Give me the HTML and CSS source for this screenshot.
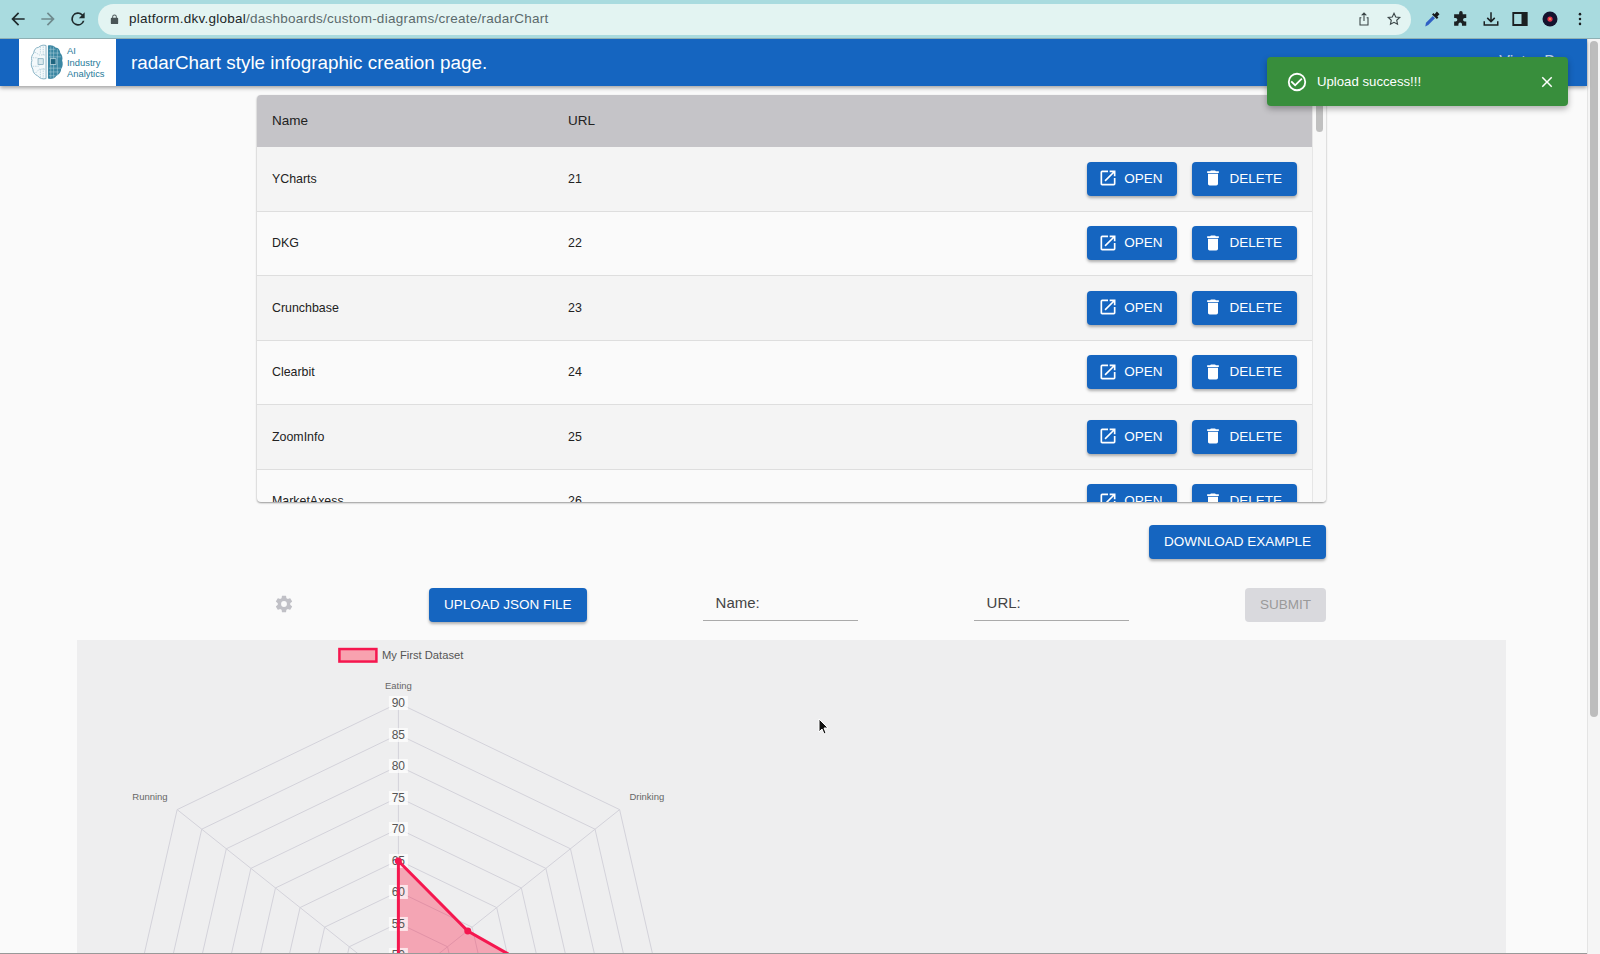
FILE: index.html
```html
<!DOCTYPE html>
<html lang="en">
<head>
  <meta charset="UTF-8">
  <meta name="viewport" content="width=device-width, initial-scale=1.0">
  <title>radarChart</title>
  <link rel="stylesheet" href="styles.css">
</head>
<body>
  <!-- browser toolbar -->
  <div class="browser-bar">
    <svg class="nav-icon" viewBox="0 0 24 24"><path d="M20 11H7.8l5.6-5.6L12 4l-8 8 8 8 1.4-1.4L7.8 13H20z" fill="#1f2a2c"/></svg>
    <svg class="nav-icon" viewBox="0 0 24 24"><path d="M4 11h12.2l-5.6-5.6L12 4l8 8-8 8-1.4-1.4 5.6-5.6H4z" fill="#6f8a8d"/></svg>
    <svg class="nav-icon" viewBox="0 0 24 24"><path d="M17.65 6.35A8 8 0 1 0 19.73 14h-2.08A6 6 0 1 1 12 6c1.66 0 3.14.69 4.22 1.78L13 11h7V4z" fill="#1f2a2c"/></svg>
    <div class="url-pill">
      <svg class="lock" viewBox="0 0 24 24"><path d="M18 8h-1V6a5 5 0 0 0-10 0v2H6a2 2 0 0 0-2 2v10c0 1.1.9 2 2 2h12a2 2 0 0 0 2-2V10a2 2 0 0 0-2-2zM9 6a3 3 0 0 1 6 0v2H9z" fill="#4a5557"/></svg>
      <span class="url-text"><b>platform.dkv.global</b>/dashboards/custom-diagrams/create/radarChart</span>
      <svg class="pill-icon" viewBox="0 0 24 24" fill="none" stroke="#3a4547" stroke-width="1.6"><path d="M8 10H6v11h12V10h-2M12 15V3M8.5 6.5 12 3l3.5 3.5"/></svg>
      <svg class="pill-icon" viewBox="0 0 24 24" fill="none" stroke="#3a4547" stroke-width="1.7"><path d="m12 3.5 2.6 5.6 6 .7-4.5 4.1 1.2 6L12 17l-5.3 2.9 1.2-6-4.5-4.1 6-.7z"/></svg>
    </div>
    <div class="ext-icons">
      <svg class="ext-icon" viewBox="0 0 24 24"><path d="m3 22 1-5 9-9 3 3-9 9z" fill="#2f5fc4"/><path d="m12 6 2-2 1.500 1.500L18.500 2 22 5.500 19 8.500l1.500 1.500-2 2z" fill="#16191a"/></svg>
      <svg class="ext-icon" viewBox="0 0 24 24"><path d="M10 3a2.500 2.500 0 0 1 5 0v2h5v5h-2a2.500 2.500 0 0 0 0 5h2v6h-6v-2a2.500 2.500 0 0 0-5 0v2H3v-6h2a2.500 2.500 0 0 0 0-5H3V5h7z" fill="#1b2022" transform="translate(0 1) scale(.95)"/></svg>
      <svg class="ext-icon" viewBox="0 0 24 24" fill="none" stroke="#1b2022" stroke-width="2"><path d="M12 3v12M7 10.500l5 5 5-5M3 15v5h18v-5"/></svg>
      <svg class="ext-icon" viewBox="0 0 24 24"><path d="M3 4h18v16H3z" fill="none" stroke="#1b2022" stroke-width="2.400"/><path d="M14 4h7v16h-7z" fill="#1b2022"/></svg>
      <svg class="ext-icon" viewBox="0 0 24 24"><circle cx="12" cy="12" r="10" fill="#14132e"/><circle cx="12" cy="12" r="3.500" fill="#e0344f"/><circle cx="12" cy="12" r="1.200" fill="#f2b33d"/></svg>
      <svg class="ext-icon" viewBox="0 0 24 24"><circle cx="12" cy="5.500" r="1.700" fill="#1b2022"/><circle cx="12" cy="12" r="1.700" fill="#1b2022"/><circle cx="12" cy="18.500" r="1.700" fill="#1b2022"/></svg>
    </div>
  </div>

  <div class="viewport">
    <div class="page">
      <header class="app-bar">
        <div class="logo-box">
          <svg class="brain" viewBox="0 0 36 40">
            <path d="M17 2c-3-1-6 0-8 2-3 0-5 3-5 6-2 2-3 5-2 8-1 3-1 6 1 9 0 3 2 6 5 7 2 3 6 4 9 3z" fill="#f4f9fb" stroke="#7fadc0" stroke-width="1"/>
            <path d="M5 9l5 3h6M3 15h5l2 2M3 24h6l2-2M6 31l4-4h6M11 3v8M14 3v9M11 27v9M14 26v11" fill="none" stroke="#9cc1cf" stroke-width=".7" stroke-dasharray="1.500 1"/>
            <rect x="8.500" y="16" width="5.500" height="6" fill="#dbe9ee" stroke="#6d9db1" stroke-width=".7"/>
            <path d="M19 2c3-1 6 0 8 2 3 0 5 3 5 6 2 2 3 5 2 8 1 3 1 6-1 9 0 3-2 6-5 7-2 3-6 4-9 3z" fill="#3a86a2"/>
            <path d="M20 6h7M20 10h11M20 14h13M20 26h13M20 30h11M20 34h7M22 3v34M25 3v34M29 6v28" stroke="#bcd8e2" stroke-width=".5"/>
            <rect x="21.500" y="16" width="6" height="6" fill="#1f6580" stroke="#d7e8ee" stroke-width=".7"/>
          </svg>
          <div class="logo-text">AI<br>Industry<br>Analytics</div>
        </div>
        <h1 class="app-title">radarChart style infographic creation page.</h1>
        <span class="user-name">Victor B</span>
      </header>

      <main class="content">
        <div class="table-wrap">
          <div class="table-scroll">
            <div class="table-head">
              <div class="col-name">Name</div>
              <div class="col-url">URL</div>
            </div>
            <div class="table-row row-alt">
              <div class="col-name">YCharts</div>
              <div class="col-url">21</div>
              <div class="row-actions">
                <button class="btn"><svg class="btn-icon" viewBox="0 0 24 24"><path d="M19 19H5V5h7V3H5a2 2 0 0 0-2 2v14c0 1.100.9 2 2 2h14a2 2 0 0 0 2-2v-7h-2zM14 3v2h3.590l-9.830 9.830 1.410 1.410L19 6.410V10h2V3z"/></svg>Open</button>
                <button class="btn"><svg class="btn-icon" viewBox="0 0 24 24"><path d="M6 19c0 1.100.9 2 2 2h8a2 2 0 0 0 2-2V7H6zM19 4h-3.500l-1-1h-5l-1 1H5v2h14z"/></svg>Delete</button>
              </div>
            </div>
            <div class="table-row">
              <div class="col-name">DKG</div>
              <div class="col-url">22</div>
              <div class="row-actions">
                <button class="btn"><svg class="btn-icon" viewBox="0 0 24 24"><path d="M19 19H5V5h7V3H5a2 2 0 0 0-2 2v14c0 1.100.9 2 2 2h14a2 2 0 0 0 2-2v-7h-2zM14 3v2h3.590l-9.830 9.830 1.410 1.410L19 6.410V10h2V3z"/></svg>Open</button>
                <button class="btn"><svg class="btn-icon" viewBox="0 0 24 24"><path d="M6 19c0 1.100.9 2 2 2h8a2 2 0 0 0 2-2V7H6zM19 4h-3.500l-1-1h-5l-1 1H5v2h14z"/></svg>Delete</button>
              </div>
            </div>
            <div class="table-row row-alt">
              <div class="col-name">Crunchbase</div>
              <div class="col-url">23</div>
              <div class="row-actions">
                <button class="btn"><svg class="btn-icon" viewBox="0 0 24 24"><path d="M19 19H5V5h7V3H5a2 2 0 0 0-2 2v14c0 1.100.9 2 2 2h14a2 2 0 0 0 2-2v-7h-2zM14 3v2h3.590l-9.830 9.830 1.410 1.410L19 6.410V10h2V3z"/></svg>Open</button>
                <button class="btn"><svg class="btn-icon" viewBox="0 0 24 24"><path d="M6 19c0 1.100.9 2 2 2h8a2 2 0 0 0 2-2V7H6zM19 4h-3.500l-1-1h-5l-1 1H5v2h14z"/></svg>Delete</button>
              </div>
            </div>
            <div class="table-row">
              <div class="col-name">Clearbit</div>
              <div class="col-url">24</div>
              <div class="row-actions">
                <button class="btn"><svg class="btn-icon" viewBox="0 0 24 24"><path d="M19 19H5V5h7V3H5a2 2 0 0 0-2 2v14c0 1.100.9 2 2 2h14a2 2 0 0 0 2-2v-7h-2zM14 3v2h3.590l-9.830 9.830 1.410 1.410L19 6.410V10h2V3z"/></svg>Open</button>
                <button class="btn"><svg class="btn-icon" viewBox="0 0 24 24"><path d="M6 19c0 1.100.9 2 2 2h8a2 2 0 0 0 2-2V7H6zM19 4h-3.500l-1-1h-5l-1 1H5v2h14z"/></svg>Delete</button>
              </div>
            </div>
            <div class="table-row row-alt">
              <div class="col-name">ZoomInfo</div>
              <div class="col-url">25</div>
              <div class="row-actions">
                <button class="btn"><svg class="btn-icon" viewBox="0 0 24 24"><path d="M19 19H5V5h7V3H5a2 2 0 0 0-2 2v14c0 1.100.9 2 2 2h14a2 2 0 0 0 2-2v-7h-2zM14 3v2h3.590l-9.830 9.830 1.410 1.410L19 6.410V10h2V3z"/></svg>Open</button>
                <button class="btn"><svg class="btn-icon" viewBox="0 0 24 24"><path d="M6 19c0 1.100.9 2 2 2h8a2 2 0 0 0 2-2V7H6zM19 4h-3.500l-1-1h-5l-1 1H5v2h14z"/></svg>Delete</button>
              </div>
            </div>
            <div class="table-row">
              <div class="col-name">MarketAxess</div>
              <div class="col-url">26</div>
              <div class="row-actions">
                <button class="btn"><svg class="btn-icon" viewBox="0 0 24 24"><path d="M19 19H5V5h7V3H5a2 2 0 0 0-2 2v14c0 1.100.9 2 2 2h14a2 2 0 0 0 2-2v-7h-2zM14 3v2h3.590l-9.830 9.830 1.410 1.410L19 6.410V10h2V3z"/></svg>Open</button>
                <button class="btn"><svg class="btn-icon" viewBox="0 0 24 24"><path d="M6 19c0 1.100.9 2 2 2h8a2 2 0 0 0 2-2V7H6zM19 4h-3.500l-1-1h-5l-1 1H5v2h14z"/></svg>Delete</button>
              </div>
            </div>
          </div>
          <div class="table-scrollbar"><div class="table-thumb"></div></div>
        </div>

        <div class="download-row">
          <button class="btn">Download Example</button>
        </div>

        <div class="form-row">
          <div class="gear-box">
            <svg class="gear" viewBox="0 0 24 24"><path d="M19.430 12.980c.04-.32.07-.64.07-.98s-.03-.66-.07-.98l2.110-1.650c.19-.15.240-.42.120-.64l-2-3.460c-.12-.22-.39-.3-.61-.22l-2.490 1c-.52-.4-1.080-.73-1.690-.98l-.38-2.650A.488.488 0 0 0 14 2h-4c-.25 0-.46.18-.49.420l-.38 2.650c-.61.25-1.170.59-1.690.98l-2.490-1c-.23-.09-.49 0-.61.220l-2 3.460c-.13.220-.07.490.12.640l2.110 1.650c-.04.32-.07.65-.07.980s.03.660.07.980l-2.110 1.650c-.19.150-.24.420-.12.640l2 3.460c.12.220.39.300.61.220l2.490-1c.52.400 1.080.730 1.690.980l.38 2.650c.03.240.24.420.49.420h4c.25 0 .46-.18.49-.42l.38-2.650c.61-.25 1.170-.59 1.690-.98l2.490 1c.23.090.49 0 .61-.22l2-3.460c.12-.22.07-.49-.12-.64zM12 15.500a3.500 3.500 0 1 1 0-7 3.500 3.500 0 0 1 0 7z"/></svg>
          </div>
          <button class="btn btn-upload">Upload JSON file</button>
          <div class="text-field field-name">Name:</div>
          <div class="text-field field-url">URL:</div>
          <button class="btn btn-disabled">Submit</button>
        </div>
      </main>

      <div class="chart-area">
        <svg class="radar" viewBox="0 0 1430 314">
          <rect class="legend-box" x="262.500" y="9" width="37" height="12.500"/>
          <text class="legend-text" x="305" y="19">My First Dataset</text>

          <g transform="translate(321.500 346)">
            <g class="grid">
              <polygon id="ring" points="0,-283 221.300,-176.400 275.900,63 122.800,255 -122.800,255 -275.900,63 -221.300,-176.400"/>
              <use href="#ring" transform="scale(.8889)"/>
              <use href="#ring" transform="scale(.7778)"/>
              <use href="#ring" transform="scale(.6667)"/>
              <use href="#ring" transform="scale(.5556)"/>
              <use href="#ring" transform="scale(.4444)"/>
              <use href="#ring" transform="scale(.3333)"/>
              <use href="#ring" transform="scale(.2222)"/>
              <use href="#ring" transform="scale(.1111)"/>
              <path d="M0 0V-283M0 0 221.300-176.400M0 0 275.900 63M0 0 122.800 255M0 0-122.800 255M0 0-275.900 63M0 0-221.300-176.400"/>
            </g>
            <polygon class="data-fill" points="0,-125 69.400,-55 276,63 0,0"/>
          </g>

          <text class="axis-label" x="321.500" y="49" text-anchor="middle">Eating</text>
          <text class="axis-label" x="73" y="160" text-anchor="middle">Running</text>
          <text class="axis-label" x="570" y="160" text-anchor="middle">Drinking</text>

          <g class="ticks" text-anchor="middle">
            <rect x="312" y="56" width="19" height="14"/><text x="321.500" y="67">90</text>
            <rect x="312" y="88" width="19" height="14"/><text x="321.500" y="99">85</text>
            <rect x="312" y="119" width="19" height="14"/><text x="321.500" y="130">80</text>
            <rect x="312" y="151" width="19" height="14"/><text x="321.500" y="162">75</text>
            <rect x="312" y="182" width="19" height="14"/><text x="321.500" y="193">70</text>
            <rect x="312" y="214" width="19" height="14"/><text x="321.500" y="225">65</text>
            <rect x="312" y="245" width="19" height="14"/><text x="321.500" y="256">60</text>
            <rect x="312" y="277" width="19" height="14"/><text x="321.500" y="288">55</text>
            <rect x="312" y="308" width="19" height="14"/><text x="321.500" y="319">50</text>
          </g>
          <g transform="translate(321.500 346)">
            <polygon class="data-line" points="0,-125 69.400,-55 276,63 0,0"/>
            <circle class="data-point" cx="0" cy="-125" r="3.500"/>
            <circle class="data-point" cx="69.400" cy="-55" r="3.500"/>
          </g>
        </svg>
      </div>
      <div class="bottom-line"></div>
    </div>

    <div class="page-scrollbar"><div class="page-thumb"></div></div>

    <!-- floating bits -->
    <div class="toast">
      <svg class="toast-check" viewBox="0 0 24 24"><path d="M16.590 7.580 10 14.170l-3.590-3.580L5 12l5 5 8-8zM12 2a10 10 0 1 0 0 20 10 10 0 0 0 0-20zm0 18a8 8 0 1 1 0-16 8 8 0 0 1 0 16z"/></svg>
      <span class="toast-text">Upload success!!!</span>
      <svg class="toast-close" viewBox="0 0 24 24"><path d="M19 6.410 17.590 5 12 10.590 6.410 5 5 6.410 10.590 12 5 17.590 6.410 19 12 13.410 17.590 19 19 17.590 13.410 12z"/></svg>
    </div>
    <svg class="cursor" viewBox="0 0 12 18"><path d="M1 1v13l3-3 2 5 2-1-2-5h4z" fill="#111" stroke="#fff" stroke-width="1"/></svg>
  </div>
</body>
</html>
```

FILE: styles.css
```css
html, body {
  margin: 0;
  height: 954px;
  overflow: hidden;
}
body {
  font-family: "Liberation Sans", Arial, sans-serif;
  background: #fafafa;
  color: #222;
}
button {
  font-family: inherit;
}

/* browser toolbar */
.browser-bar {
  height: 39px;
  box-sizing: border-box;
  border-bottom: 1px solid #8fb0b3;
  background: #a9dbdf;
  display: flex;
  align-items: center;
  padding-left: 8px;
  gap: 10px;
}
.nav-icon {
  width: 20px;
  height: 20px;
}
.url-pill {
  width: 1313px;
  height: 31px;
  border-radius: 16px;
  background: #e3f4f2;
  display: flex;
  align-items: center;
  padding: 0 9px 0 11px;
  box-sizing: border-box;
}
.lock {
  width: 11px;
  height: 11px;
  margin-right: 9px;
}
.url-text {
  flex: 1;
  font-size: 13.500px;
  color: #5b6a6c;
  letter-spacing: .25px;
  padding-bottom: 1px;
}
.url-text b {
  font-weight: normal;
  color: #1b2628;
}
.pill-icon {
  width: 16px;
  height: 16px;
  margin-left: 13.600px;
}
.ext-icons {
  display: flex;
  align-items: center;
  gap: 11.600px;
  margin-left: 1.600px;
}
.ext-icon {
  width: 18px;
  height: 18px;
}

.viewport {
  position: relative;
  display: flex;
  height: 915px;
  overflow: hidden;
}
.page {
  flex: 1;
  min-width: 0;
  position: relative;
}

/* app bar */
.app-bar {
  height: 47px;
  background: #1565c0;
  box-shadow: 0 2px 4px rgba(0, 0, 0, .35);
  display: flex;
  align-items: center;
  padding-left: 19px;
  color: #fff;
}
.logo-box {
  width: 97px;
  height: 47px;
  box-sizing: border-box;
  background: #fff;
  display: flex;
  align-items: center;
  padding-left: 11px;
  gap: 3px;
}
.brain {
  width: 34px;
  height: 39px;
}
.logo-text {
  font-size: 9.400px;
  line-height: 11.500px;
  color: #1f7a9a;
}
.app-title {
  margin: 0 0 0 15px;
  font-size: 18.850px;
  font-weight: normal;
}
.user-name {
  margin-left: auto;
  margin-right: 32px;
  margin-top: -2px;
  font-size: 16px;
  opacity: .7;
}

/* table */
.content {
  margin: 9px 261px 0 257px;
}
.table-wrap {
  height: 407px;
  display: flex;
  overflow: hidden;
  border-radius: 4px;
  background: #fafafa;
  box-shadow: 0 1px 2px rgba(0, 0, 0, .4);
}
.table-scroll {
  flex: 1;
  min-width: 0;
}
.table-head {
  height: 52px;
  padding-bottom: 2px;
  box-sizing: border-box;
  background: #c5c4c8;
  display: flex;
  align-items: center;
  font-size: 13.500px;
}
.table-row {
  height: 64.500px;
  box-sizing: border-box;
  border-bottom: 1px solid #dedede;
  display: flex;
  align-items: center;
  font-size: 12.400px;
}
.row-alt {
  background: #f4f4f4;
}
.col-name {
  width: 311px;
  padding-left: 15px;
  box-sizing: border-box;
}
.col-url {
  width: 100px;
}
.row-actions {
  margin-left: auto;
  margin-right: 15px;
  display: flex;
  gap: 15px;
}
.table-scrollbar {
  width: 14px;
  background: #f8f8f8;
  border-left: 1px solid #e6e6e6;
  box-sizing: border-box;
  padding: 2px 3px;
}
.table-thumb {
  height: 35px;
  border-radius: 4px;
  background: #c0c0c0;
}

/* buttons */
.btn {
  height: 34px;
  padding: 0 15px 1px;
  border: 0;
  border-radius: 4px;
  background: #1565c0;
  color: #fff;
  font-size: 13.500px;
  font-weight: normal;
  text-transform: uppercase;
  display: inline-flex;
  align-items: center;
  box-shadow: 0 2px 3px rgba(0, 0, 0, .3);
}
.btn-icon {
  width: 20px;
  height: 20px;
  fill: #fff;
  margin-right: 6px;
  margin-left: -4px;
}

.download-row {
  display: flex;
  justify-content: flex-end;
  margin-top: 23px;
}

/* form row */
.form-row {
  display: flex;
  align-items: flex-start;
  margin-top: 26px;
  height: 37px;
}
.gear-box {
  width: 54px;
  height: 37px;
  display: flex;
  align-items: center;
  justify-content: center;
}
.gear {
  width: 20px;
  height: 20px;
  fill: #c0c0c6;
}
.btn-upload {
  margin-left: 118px;
  margin-top: 3px;
}
.text-field {
  width: 155px;
  height: 35px;
  margin-top: 1px;
  box-sizing: border-box;
  border-bottom: 1px solid #aaa;
  padding: 8px 0 0 13px;
  font-size: 15px;
  color: #444;
}
.field-name {
  margin-left: 116px;
}
.field-url {
  margin-left: 116px;
}
.btn-disabled {
  margin-left: auto;
  margin-top: 3px;
  background: #d9d9dd;
  color: #9a9a9a;
  box-shadow: none;
}

/* chart */
.chart-area {
  margin: 18px 81px 0 76.500px;
  height: 314px;
  background: #eeeeef;
}
.radar {
  display: block;
  width: 100%;
  height: 100%;
}
.legend-box {
  fill: #f8a2af;
  stroke: #f5174f;
  stroke-width: 2.500;
}
.legend-text {
  font-size: 11.200px;
  fill: #555;
}
.axis-label {
  font-size: 9.500px;
  fill: #666;
}
.grid polygon, .grid use, .grid path {
  fill: none;
  stroke: #d3d2da;
  stroke-width: 1;
  vector-effect: non-scaling-stroke;
}
.data-fill {
  fill: rgba(255, 23, 68, .34);
}
.data-line {
  fill: none;
  stroke: #f5174f;
  stroke-width: 3;
}
.data-point {
  fill: #f5174f;
}
.ticks rect {
  fill: rgba(255, 255, 255, .7);
}
.ticks text {
  font-size: 12px;
  fill: #555;
}
.bottom-line {
  position: absolute;
  left: 0;
  right: 0;
  bottom: 0;
  height: 1px;
  background: #999;
}

.page-scrollbar {
  width: 13px;
  background: #f5f5f5;
  border-left: 1px solid #e4e4e4;
  box-sizing: border-box;
  padding: 2px 2px;
}
.page-thumb {
  height: 676px;
  border-radius: 5px;
  background: #bdbdbd;
}

/* toast and mouse pointer lie over the page */
.toast {
  position: absolute;
  left: 1267px;
  top: 18px;
  width: 301px;
  height: 49px;
  box-sizing: border-box;
  padding: 0 12px 0 19px;
  border-radius: 4px;
  background: #388e3c;
  color: #fff;
  display: flex;
  align-items: center;
  font-size: 13.200px;
  box-shadow: 0 3px 6px rgba(0, 0, 0, .3);
}
.toast-check {
  width: 22px;
  height: 22px;
  fill: #fff;
  margin-right: 9px;
}
.toast-text {
  flex: 1;
}
.toast-close {
  width: 18px;
  height: 18px;
  fill: #fff;
}
.cursor {
  position: absolute;
  left: 818px;
  top: 679px;
  width: 12px;
  height: 18px;
}
```
